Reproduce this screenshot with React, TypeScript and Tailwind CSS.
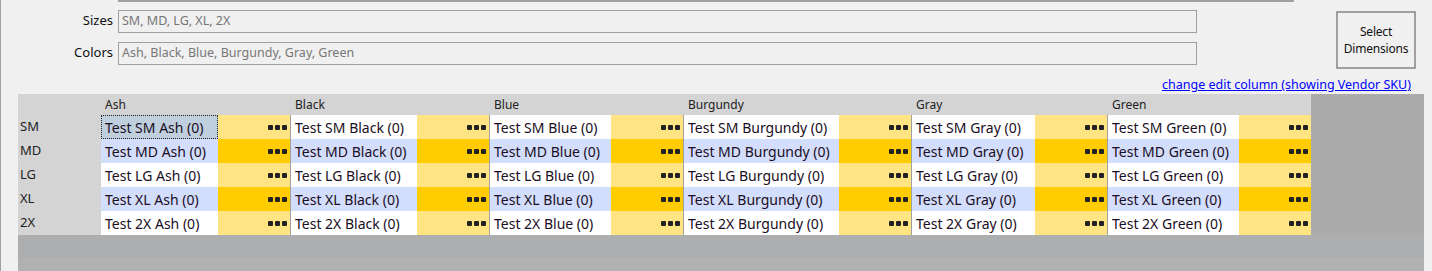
import React from "react";

const sizes = ["SM", "MD", "LG", "XL", "2X"];

// white cell widths include the 1px left divider (except the first column)
const colors = [
  { name: "Ash", w: "w-[117px]", hw: "w-[189px]", first: true },
  { name: "Black", w: "w-[127px]", hw: "w-[199px]", first: false },
  { name: "Blue", w: "w-[122px]", hw: "w-[194px]", first: false },
  { name: "Burgundy", w: "w-[156px]", hw: "w-[228px]", first: false },
  { name: "Gray", w: "w-[124px]", hw: "w-[196px]", first: false },
  { name: "Green", w: "w-[132px]", hw: "w-[204px]", first: false },
];

const font = "font-['Noto_Sans','Open_Sans',sans-serif]";

function Dots() {
  return (
    <div className="flex gap-[2px] pr-[3px]">
      <span className="h-[5px] w-[5px] rounded-[1px] bg-[#222]" />
      <span className="h-[5px] w-[5px] rounded-[1px] bg-[#222]" />
      <span className="h-[5px] w-[5px] rounded-[1px] bg-[#222]" />
    </div>
  );
}

export default function App() {
  return (
    <div className={`relative h-[271px] w-[1432px] overflow-hidden border-l border-[#a0a0a0] bg-[#f0f0f0] ${font}`}>
      {/* Top form */}
      <div className="h-[94px]">
        <div className="flex h-[69px]">
          <div className="flex w-[1196px] flex-col">
            <div className="ml-[117px] h-[2px] w-[1176px] bg-[#a0a0a0]" />
            <div className="mt-[8px] flex h-[23px] items-center">
              <span className="-mt-[3px] w-[113px] pr-[1px] text-right text-[13px] leading-none text-[#111]">Sizes</span>
              <div className="ml-[4px] flex h-[23px] w-[1079px] items-center border border-[#a0a0a0] px-[3px] text-[12.5px] text-[#777]">
                SM, MD, LG, XL, 2X
              </div>
            </div>
            <div className="mt-[9px] flex h-[23px] items-center">
              <span className="-mt-[3px] w-[113px] pr-[1px] text-right text-[13px] leading-none text-[#111]">Colors</span>
              <div className="ml-[4px] flex h-[23px] w-[1079px] items-center border border-[#a0a0a0] px-[3px] text-[12.5px] text-[#777]">
                Ash, Black, Blue, Burgundy, Gray, Green
              </div>
            </div>
          </div>
          <div className="flex flex-1 justify-end pr-[16px]">
            <button className="mt-[11px] flex h-[58px] w-[80px] flex-col items-center justify-center border-2 border-[#a0a0a0] text-[12px] leading-[17px] tracking-[-0.2px] text-[#111]">
              <span>Select</span>
              <span>Dimensions</span>
            </button>
          </div>
        </div>
        <div className="mt-[2px] pr-[21px] text-right">
          <a href="#" className="whitespace-nowrap text-[12.5px] leading-[16px] text-[#0000ff] underline">
            change edit column (showing Vendor SKU)
          </a>
        </div>
      </div>

      {/* Dimension grid */}
      <div className="ml-[17px] w-[1406px] bg-[#ababab]">
        <div className="w-[1293px]">
          <div className="flex h-[21px] items-center bg-[#d4d4d4] text-[12px] text-[#222]">
            <div className="w-[83px]" />
            {colors.map((c) => (
              <div key={c.name} className={`${c.hw} ${c.first ? "pl-[4px]" : "pl-[5px]"}`}>
                {c.name}
              </div>
            ))}
          </div>
          {sizes.map((s, i) => {
            const even = i % 2 === 1;
            return (
              <div key={s} className="flex h-[24px] text-[14px] text-[#1a0e24]">
                <div className="flex w-[83px] items-center bg-[#d4d4d4] pl-[2px] text-[13px] text-[#222]">{s}</div>
                {colors.map((c, j) => {
                  const selected = i === 0 && j === 0;
                  return (
                    <React.Fragment key={c.name}>
                      <div
                        className={`${c.w} flex items-center whitespace-nowrap ${c.first ? "" : "border-l border-[#a0a0a0]"} ${
                          selected
                            ? "border border-dotted border-[#222] bg-[#c0cfdd] pl-[3px]"
                            : even
                            ? "bg-[#d3ddfc] pl-[4px]"
                            : "bg-white pl-[4px]"
                        }`}
                      >
                        Test {s} {c.name} (0)
                      </div>
                      <div className={`flex w-[72px] items-center justify-end ${even ? "bg-[#ffcc00]" : "bg-[#ffe484]"}`}>
                        <Dots />
                      </div>
                    </React.Fragment>
                  );
                })}
              </div>
            );
          })}
        </div>
        <div className="h-[23px] bg-[#adaeb0]" />
        <div className="h-[13px] bg-[#b1b1b1]" />
      </div>
    </div>
  );
}
